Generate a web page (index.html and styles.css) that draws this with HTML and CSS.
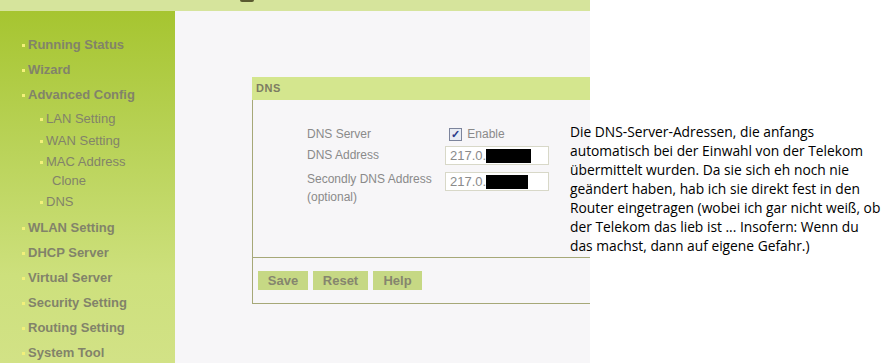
FILE: index.html
```html
<!DOCTYPE html>
<html lang="de">
<head>
  <meta charset="UTF-8">
  <title>DNS</title>
  <link rel="stylesheet" href="styles.css">
</head>
<body>
  <div class="router">
    <div class="topbar"><span class="logo-bit"></span></div>
    <div class="layout">
      <ul class="menu">
        <li class="top">Running Status</li>
        <li class="top">Wizard</li>
        <li class="top">Advanced Config</li>
        <li class="sub">LAN Setting</li>
        <li class="sub">WAN Setting</li>
        <li class="sub">MAC Address<br><span class="cont">Clone</span></li>
        <li class="sub">DNS</li>
        <li class="top">WLAN Setting</li>
        <li class="top">DHCP Server</li>
        <li class="top">Virtual Server</li>
        <li class="top">Security Setting</li>
        <li class="top">Routing Setting</li>
        <li class="top">System Tool</li>
      </ul>
      <div class="main">
        <div class="panel">
          <div class="panel-head">DNS</div>
          <div class="panel-body">
            <div class="form">
              <div class="row">
                <div class="label">DNS Server</div>
                <div class="value"><span class="check">&#10003;</span> Enable</div>
              </div>
              <div class="row">
                <div class="label">DNS Address</div>
                <div class="value"><span class="field">217.0.<span class="redact"></span></span></div>
              </div>
              <div class="row">
                <div class="label">Secondly DNS Address<br>(optional)</div>
                <div class="value"><span class="field">217.0.<span class="redact short"></span></span></div>
              </div>
            </div>
            <div class="buttons">
              <span class="btn">Save</span>
              <span class="btn">Reset</span>
              <span class="btn">Help</span>
            </div>
          </div>
        </div>
      </div>
    </div>
  </div>
  <p class="note">Die DNS-Server-Adressen, die anfangs<br>automatisch bei der Einwahl von der Telekom<br>übermittelt wurden. Da sie sich eh noch nie<br>geändert haben, hab ich sie direkt fest in den<br>Router eingetragen (wobei ich gar nicht weiß, ob<br>der Telekom das lieb ist ... Insofern: Wenn du<br>das machst, dann auf eigene Gefahr.)</p>
</body>
</html>
```

FILE: styles.css
```css
body {
  margin: 0;
  background: #fff;
  font-family: "Liberation Sans", Arial, sans-serif;
  position: relative;
  height: 363px;
  overflow: hidden;
}
.router {
  width: 590px;
  height: 363px;
  background: #f7f6f8;
}
.topbar {
  height: 11px;
  background: #d6e49c;
  position: relative;
}
.logo-bit {
  position: absolute;
  left: 240px;
  top: 0;
  width: 14px;
  height: 2px;
  background: #5a5a30;
  border-radius: 0 0 6px 6px;
}
.layout {
  display: flex;
  height: 352px;
}
.menu {
  width: 175px;
  margin: 0;
  padding: 26px 0 0 0;
  list-style: none;
  background: linear-gradient(#a6c530 0%, #bad35a 40%, #cde07c 75%, #d2e286 100%);
  box-sizing: border-box;
  font-size: 13px;
  color: #82836a;
}
.menu li {
  position: relative;
}
.menu li::before {
  content: "";
  position: absolute;
  width: 3px;
  height: 3px;
  background: #f2f07a;
  top: 7px;
}
.menu .top {
  font-weight: bold;
  padding-left: 28px;
  height: 25px;
  line-height: 15px;
}
.menu .top::before {
  left: 22px;
}
.menu .sub {
  padding-left: 46px;
  line-height: 15px;
  height: 22px;
}
.menu .sub::before {
  left: 40px;
}
.menu .sub .cont {
  display: inline-block;
  padding-left: 6px;
  margin-top: 4px;
}
.menu li:nth-child(3) {
  height: 24px;
}
.menu li:nth-child(5) {
  height: 21px;
}
.menu li:nth-child(6) {
  height: 40px;
}
.menu li:nth-child(7) {
  height: 26px;
}
.main {
  flex: 1;
  padding: 66px 0 0 77px;
}
.panel-head {
  height: 23px;
  background: #d4e68e;
  color: #7c7c62;
  font-weight: bold;
  font-size: 11px;
  letter-spacing: 0.5px;
  line-height: 23px;
  padding-left: 4px;
}
.panel-body {
  border-left: 1px solid #a6a878;
  border-bottom: 1px solid #a6a878;
  height: 204px;
  box-sizing: border-box;
}
.form {
  padding: 25px 0 0 54px;
  height: 158px;
  box-sizing: border-box;
  border-bottom: 1px solid #a6a878;
  font-size: 12px;
  color: #8a8a8a;
}
.row {
  display: flex;
}
.label {
  width: 138px;
  line-height: 18px;
}
.row:nth-child(1) {
  height: 21px;
}
.row:nth-child(2) {
  height: 24px;
}
.row:nth-child(3) .value {
  padding-top: 2px;
}
.check {
  display: inline-block;
  width: 11px;
  height: 11px;
  border: 1px solid #7c849c;
  background: #e8ecf4;
  color: #2a3a8a;
  font-size: 11px;
  line-height: 11px;
  text-align: center;
  font-weight: bold;
  margin: 3px 2px 0 4px;
  vertical-align: top;
}
.value {
  line-height: 18px;
}
.field {
  display: inline-flex;
  align-items: center;
  width: 104px;
  height: 19px;
  box-sizing: border-box;
  border: 1px solid #d8d8c8;
  background: #fff;
  padding-left: 4px;
  font-size: 13px;
  color: #8a8a8a;
}
.redact {
  display: inline-block;
  width: 45px;
  height: 14px;
  background: #000;
}
.redact.short {
  width: 42px;
}
.buttons {
  display: flex;
  gap: 5px;
  padding: 13px 0 0 5px;
}
.btn {
  background: #c6d884;
  color: #85856e;
  font-weight: bold;
  font-size: 13px;
  height: 19px;
  line-height: 20px;
  text-align: center;
  width: 50px;
}
.btn:nth-child(2) {
  width: 55px;
}
.btn:nth-child(3) {
  width: 49px;
}
.note {
  position: absolute;
  left: 570px;
  top: 122px;
  width: 325px;
  margin: 0;
  font-family: "Open Sans", sans-serif;
  font-size: 13.8px;
  line-height: 19px;
  color: #000;
  white-space: nowrap;
}
```
